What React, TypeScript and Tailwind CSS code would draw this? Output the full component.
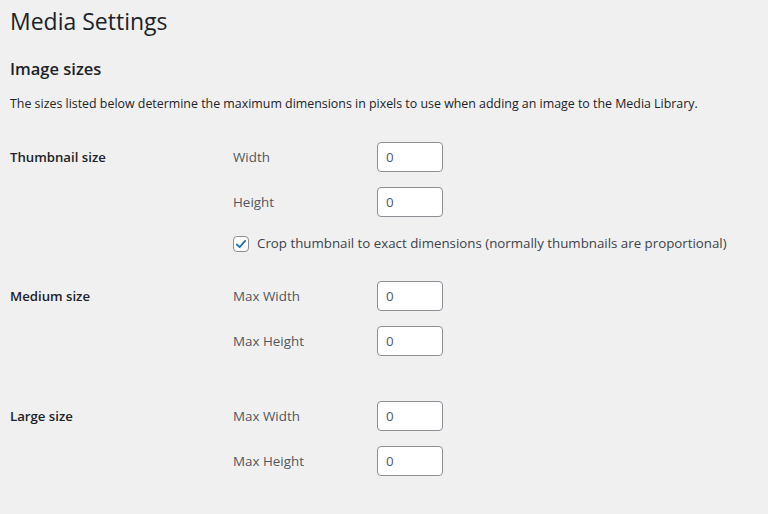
const font = { fontFamily: '"Open Sans", "Noto Sans", sans-serif' };

type Field = { label: string };

const NumberRow = ({ label }: Field) => (
  <div className="flex items-center h-[30px]">
    <span className="w-[144px] text-[13.4px] text-[#50575e]">{label}</span>
    <input
      type="text"
      defaultValue="0"
      className="w-[66px] h-[30px] rounded-[4px] border border-[#8c8f94] bg-white px-2 text-[13.4px] text-[#50575e] outline-none"
    />
  </div>
);

const SizeSection = ({
  title,
  fields,
  children,
  className,
}: {
  title: string;
  fields: string[];
  children?: React.ReactNode;
  className?: string;
}) => (
  <div className={`flex ${className ?? ""}`}>
    <div className="w-[223px] pt-[6px] text-[13.2px] font-semibold text-[#1d2327]">{title}</div>
    <div className="flex flex-col gap-[15px]">
      {fields.map((f) => (
        <NumberRow key={f} label={f} />
      ))}
      {children}
    </div>
  </div>
);

export default function App() {
  return (
    <div className="min-h-screen bg-[#f0f0f1] pl-[10px] pt-[7px] text-[#1d2327]" style={font}>
      <h1 className="text-[23px] leading-[1.3] font-normal">Media Settings</h1>
      <h2 className="mt-[21px] text-[16.5px] font-semibold leading-[1.3]">Image sizes</h2>
      <p className="mt-[16px] text-[12.4px] text-[#1d2327]">
        The sizes listed below determine the maximum dimensions in pixels to use when adding an image to the Media Library.
      </p>

      <SizeSection title="Thumbnail size" fields={["Width", "Height"]} className="mt-[28px]">
        <label className="mt-[2px] flex h-[20px] items-center gap-[8px] text-[13.3px] text-[#3c434a]">
          <span className="flex h-[16px] w-[16px] items-center justify-center rounded-[4px] border border-[#8c8f94] bg-white">
            <svg viewBox="0 0 20 20" className="h-[14px] w-[14px]">
              <path d="M4 10.5l4 4 8-9" fill="none" stroke="#2271b1" strokeWidth="2.6" strokeLinecap="round" strokeLinejoin="round" />
            </svg>
          </span>
          Crop thumbnail to exact dimensions (normally thumbnails are proportional)
        </label>
      </SizeSection>

      <SizeSection title="Medium size" fields={["Max Width", "Max Height"]} className="mt-[27px]" />
      <SizeSection title="Large size" fields={["Max Width", "Max Height"]} className="mt-[45px]" />
    </div>
  );
}
